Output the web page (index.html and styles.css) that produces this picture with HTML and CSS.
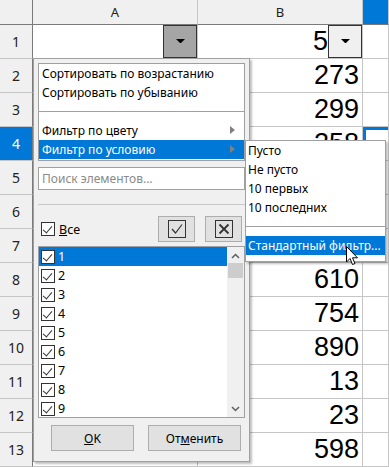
FILE: index.html
```html
<!DOCTYPE html>
<html>
<head>
    <meta charset="utf-8">
    <title>Автофильтр</title>
    <link rel="stylesheet" href="styles.css">
</head>
<body>
<div class="sheet">
    <div class="cell corner"></div>
    <div class="cell colhead">A</div>
    <div class="cell colhead">B</div>
    <div class="cell colhead on"></div>

    <div class="cell rowhead">1</div>
    <div class="cell"><span class="drop pressed"><svg width="9" height="5"><polygon points="0,0 9,0 5,4 4,4" fill="#000"/></svg></span></div>
    <div class="cell num">5<span class="drop"><svg width="9" height="5"><polygon points="0,0 9,0 5,4 4,4" fill="#000"/></svg></span></div>
    <div class="cell"></div>

    <div class="cell rowhead">2</div><div class="cell"></div><div class="cell num">273</div><div class="cell"></div>
    <div class="cell rowhead">3</div><div class="cell"></div><div class="cell num">299</div><div class="cell"></div>
    <div class="cell rowhead on">4</div><div class="cell"></div><div class="cell num">258</div><div class="cell cur"></div>
    <div class="cell rowhead">5</div><div class="cell"></div><div class="cell num"></div><div class="cell"></div>
    <div class="cell rowhead">6</div><div class="cell"></div><div class="cell num"></div><div class="cell"></div>
    <div class="cell rowhead">7</div><div class="cell"></div><div class="cell num"></div><div class="cell"></div>
    <div class="cell rowhead">8</div><div class="cell"></div><div class="cell num">610</div><div class="cell"></div>
    <div class="cell rowhead">9</div><div class="cell"></div><div class="cell num">754</div><div class="cell"></div>
    <div class="cell rowhead">10</div><div class="cell"></div><div class="cell num">890</div><div class="cell"></div>
    <div class="cell rowhead">11</div><div class="cell"></div><div class="cell num">13</div><div class="cell"></div>
    <div class="cell rowhead">12</div><div class="cell"></div><div class="cell num">23</div><div class="cell"></div>
    <div class="cell rowhead">13</div><div class="cell"></div><div class="cell num">598</div><div class="cell"></div>
</div>

<!-- всплывающее окно автофильтра -->
<div class="popup">
    <ul class="menu">
        <li>Сортировать по возрастанию</li>
        <li>Сортировать по убыванию</li>
        <li class="sep"></li>
        <li class="sub">Фильтр по цвету</li>
        <li class="sub hl">Фильтр по условию</li>
    </ul>
    <div class="search">Поиск элементов...</div>
    <div class="line"></div>
    <div class="allrow">
        <label class="all"><span class="cb"></span><span><u>В</u>се</span></label>
        <span class="btn sq"><svg width="18" height="18"><rect x="0.5" y="0.5" width="17" height="17" fill="none" stroke="#333"/><polyline points="4,9 7.5,13 14,4.5" fill="none" stroke="#333" stroke-width="1.2"/></svg></span>
        <span class="btn sq"><svg width="18" height="18"><rect x="0.5" y="0.5" width="17" height="17" fill="none" stroke="#333"/><path d="M4.5 4.5 L13.5 13.5 M13.5 4.5 L4.5 13.5" stroke="#333" stroke-width="1.8"/></svg></span>
    </div>
    <div class="list">
        <ul class="items">
            <li class="hl"><span class="cb"></span>1</li>
            <li><span class="cb"></span>2</li>
            <li><span class="cb"></span>3</li>
            <li><span class="cb"></span>4</li>
            <li><span class="cb"></span>5</li>
            <li><span class="cb"></span>6</li>
            <li><span class="cb"></span>7</li>
            <li><span class="cb"></span>8</li>
            <li><span class="cb"></span>9</li>
        </ul>
        <div class="scroll">
            <svg width="9" height="6"><polyline points="1,5 4.5,1.5 8,5" fill="none" stroke="#606060" stroke-width="1.5"/></svg>
            <div class="thumb"></div>
            <div class="track"></div>
            <svg width="9" height="6"><polyline points="1,1 4.5,4.5 8,1" fill="none" stroke="#606060" stroke-width="1.5"/></svg>
        </div>
    </div>
    <div class="actions">
        <span class="btn ok"><u>O</u>K</span>
        <span class="btn cancel">От<u>м</u>енить</span>
    </div>
</div>

<ul class="submenu">
    <li>Пусто</li>
    <li>Не пусто</li>
    <li>10 первых</li>
    <li>10 последних</li>
    <li class="sep"></li>
    <li class="hl">Стандартный фильтр...</li>
</ul>

<svg class="pointer" width="13" height="20" viewBox="0 0 13 20">
    <path d="M0.5 0.5 L0.5 16 L4 12.5 L6.5 18.5 L9 17.5 L6.5 11.8 L11.5 11.8 Z" fill="#fff" stroke="#000" stroke-width="1"/>
</svg>
</body>
</html>
```

FILE: styles.css
```css
body,div,span,ul,li{ margin:0; padding:0; }
ul,li{ list-style:none; }
*{ box-sizing:border-box; }
body{
    font-family: "Noto Sans", "Open Sans", sans-serif;
    font-size: 12px;
    background: #fff;
    width: 389px; height: 467px; overflow: hidden;
    position: relative;
}

/* таблица */
.sheet{
    display: grid;
    grid-template-columns: 33px 165px 165px 1fr;
    grid-template-rows: 25px repeat(13, 34px);
}
.cell{
    border-right: 1px solid #c6c6c6;
    border-bottom: 1px solid #c6c6c6;
    display: flex; align-items: center;
    position: relative;
}
.corner{ background:#f0f0f0; border-right-color:#7a7a7a; border-bottom-color:#7a7a7a; }
.colhead{
    background:#f0f0f0; justify-content:center;
    border-bottom-color:#7a7a7a;
    font-size: 13px; color:#222;
}
.rowhead{
    background:#f0f0f0; justify-content:center;
    border-right-color:#7a7a7a;
    font-size: 14px; color:#222;
}
.colhead.on,.rowhead.on{ background:#0078d7; color:#fff; }
.num{
    justify-content:flex-end;
    font-family:"Liberation Sans", Arial, sans-serif;
    font-size: 27px;
    padding-right: 3px;
}
.cur{ box-shadow: inset 3px 3px 0 #0078d7; }

.drop{
    width: 34px; height: 33px;
    display:flex; align-items:center; justify-content:center;
    border: 1px solid #333;
    background:#f0f0f0;
    margin-left: auto; margin-top:-1px;
}
.num .drop{ margin-left: 0; margin-right:-3px; }
.drop.pressed{ background:#a5a5a5; margin-right:0; }

/* всплывающее окно */
.popup{
    position:absolute; left:33px; top:58px;
    width:217px; height:404px;
    background:#f0f0f0;
    border:1px solid #a0a0a0;
    box-shadow: 2px 2px 2px rgba(0,0,0,0.25);
    padding: 4px 4px 0 4px;
    display:flex; flex-direction:column;
}
.menu{
    background:#fff;
    border:1px solid #a0a0a0;
    height: 98px;
}
.menu li,.submenu li{
    height:19px; line-height:19px;
    padding-left:3px;
    white-space:nowrap;
    position:relative;
}
.menu li.sep,.submenu li.sep{
    height:19px;
}
.menu li.sep::after,.submenu li.sep::after{
    content:""; position:absolute; left:0; right:0; top:9px;
    border-top:1px solid #a0a0a0;
}
.menu .sub::after{
    content:""; position:absolute; right:9px; top:5px;
    border-left:5px solid #808080;
    border-top:4.5px solid transparent; border-bottom:4.5px solid transparent;
}
.hl{ background:#0078d7; color:#fff; }

.search{
    margin-top:6px;
    height:23px;
    background:#fff;
    border:1px solid #a0a0a0;
    color:#8a8a8a;
    padding-left:3px; line-height:21px;
}
.line{
    margin-top:14px;
    border-top:1px solid #c8c8c8;
}
.allrow{
    margin-top:11px;
    display:flex; align-items:center;
    height:26px;
}
.all{ display:flex; align-items:center; gap:4px; flex:1; padding-left:3px; font-size:12.5px; }
.btn{
    display:flex; align-items:center; justify-content:center;
    background:#e1e1e1;
    border:1px solid #adadad;
    height:26px;
}
.sq{ width:37px; margin-right:10px; }
.sq:last-child{ margin-right:3px; }

.cb{
    display:inline-block; width:14px; height:14px;
    border:1px solid #333; background:#fff;
    position:relative;
}
.cb::after{
    content:""; position:absolute; left:3px; top:1px;
    width:4px; height:8px;
    border-right:1.5px solid #333; border-bottom:1.5px solid #333;
    transform: rotate(40deg);
}

.list{
    margin-top:4px;
    height:172px;
    background:#fff;
    border:1px solid #a0a0a0;
    display:flex;
}
.items{ flex:1; }
.items li{
    height:19px; display:flex; align-items:center; gap:3px;
    padding-left:2px; font-size:12.5px;
}
.scroll{
    width:17px; background:#f0f0f0;
    display:flex; flex-direction:column; align-items:center;
    padding:6px 0 5px;
}
.thumb{ width:15px; height:15px; background:#cdcdcd; margin-top:4px; }
.track{ flex:1; }

.actions{
    margin-top:7px;
    display:flex; gap:14px;
    padding-left:13px;
}
.ok{ width:83px; }
.cancel{ width:93px; }

/* подменю */
.submenu{
    position:absolute; left:245px; top:140px;
    width:141px; height:122px;
    background:#fff;
    border:1px solid #a0a0a0;
    box-shadow: 2px 2px 2px rgba(0,0,0,0.25);
}
.submenu li{ padding-left:2px; }

.pointer{ position:absolute; left:346px; top:246px; }
```
